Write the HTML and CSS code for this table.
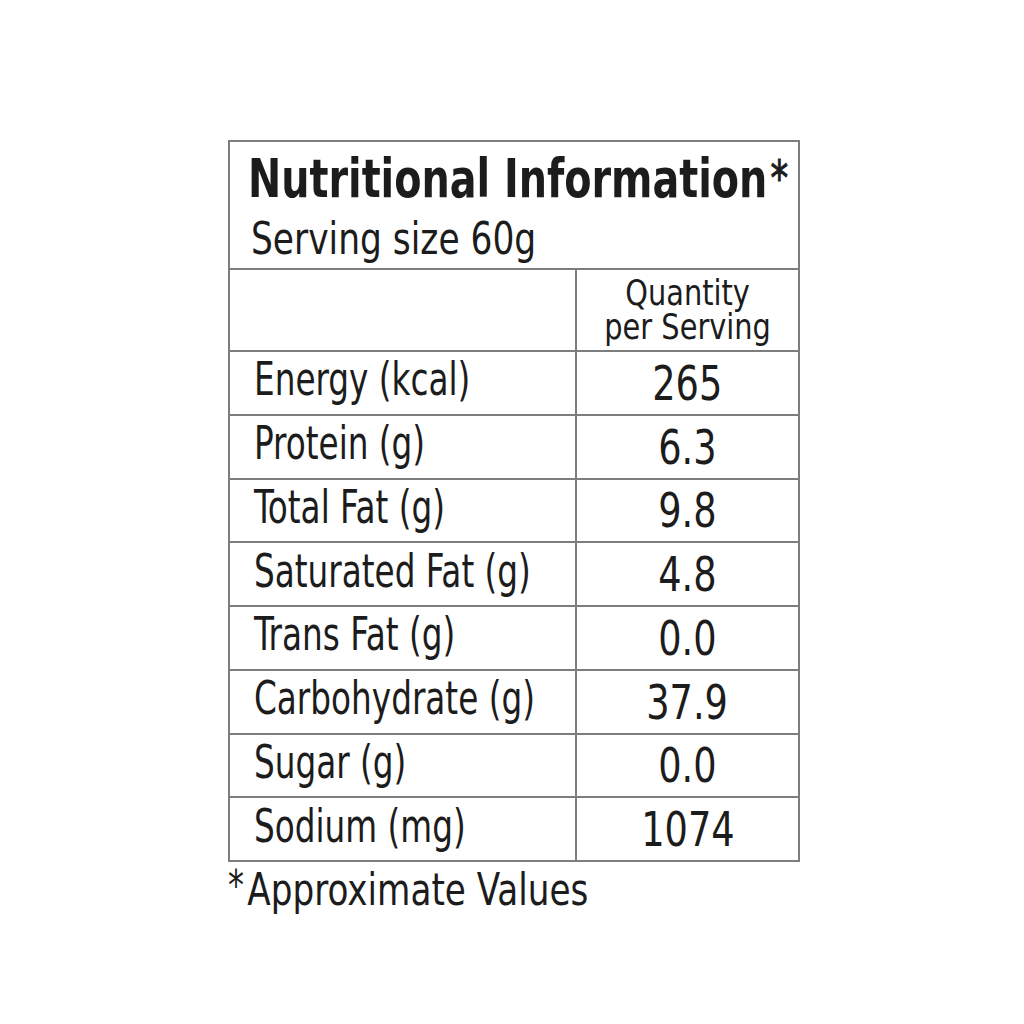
FILE: index.html
```html
<!DOCTYPE html>
<html>
<head>
<meta charset="utf-8">
<link rel="stylesheet" href="styles.css">
</head>
<body>
<div class="wrap">
  <table class="facts">
    <colgroup><col class="c1"><col class="c2"></colgroup>
    <tr>
      <td class="head" colspan="2">
        <div class="title"><span class="sx">Nutritional Information<span class="star">*</span></span></div>
        <div class="serving"><span class="sx">Serving size 60g</span></div>
      </td>
    </tr>
    <tr class="colhead">
      <td></td>
      <td class="qty"><span class="sxc">Quantity<br>per Serving</span></td>
    </tr>
    <tr><td class="name"><span class="sx">Energy (kcal)</span></td><td class="val"><span class="sxc">265</span></td></tr>
    <tr><td class="name"><span class="sx">Protein (g)</span></td><td class="val"><span class="sxc">6.3</span></td></tr>
    <tr><td class="name"><span class="sx">Total Fat (g)</span></td><td class="val"><span class="sxc">9.8</span></td></tr>
    <tr><td class="name"><span class="sx">Saturated Fat (g)</span></td><td class="val"><span class="sxc">4.8</span></td></tr>
    <tr><td class="name"><span class="sx">Trans Fat (g)</span></td><td class="val"><span class="sxc">0.0</span></td></tr>
    <tr><td class="name"><span class="sx">Carbohydrate (g)</span></td><td class="val"><span class="sxc">37.9</span></td></tr>
    <tr><td class="name"><span class="sx">Sugar (g)</span></td><td class="val"><span class="sxc">0.0</span></td></tr>
    <tr><td class="name"><span class="sx">Sodium (mg)</span></td><td class="val"><span class="sxc">1074</span></td></tr>
  </table>
  <div class="note"><span class="sx"><span class="nstar">*</span>Approximate Values</span></div>
</div>
</body>
</html>
```
FILE: styles.css
```css
html, body {
  margin: 0;
  padding: 0;
  background: #ffffff;
}
body {
  font-family: "DejaVu Sans Condensed", "DejaVu Sans", sans-serif;
  color: #1c1c1c;
}
.wrap {
  padding: 140px 0 0 228px;
}
.facts {
  border-collapse: collapse;
  table-layout: fixed;
  width: 570px;
  border: 2px solid #7d7d7d;
}
.c1 { width: 347px; }
.c2 { width: 223px; }
.facts td {
  border: 2px solid #7d7d7d;
  padding: 0;
  overflow: visible;
  white-space: nowrap;
}
.sx {
  display: inline-block;
  white-space: nowrap;
  transform-origin: 0 50%;
}
.sxc {
  display: inline-block;
  white-space: nowrap;
  transform-origin: 50% 50%;
}
.facts .head {
  height: 126px;
  padding: 0 0 0 18px;
  vertical-align: top;
}
.title {
  font-weight: bold;
  font-size: 54px;
  line-height: 60px;
  margin-top: 7px;
}
.title .sx {
  transform: scaleX(0.817);
}
.star {
  font-weight: normal;
  margin-left: 4px;
  font-size: 48px;
  position: relative;
  top: -2px;
  -webkit-text-stroke: 1px #1c1c1c;
}
.serving {
  font-size: 44px;
  line-height: 48px;
  margin-top: 5px;
  margin-left: 3px;
}
.serving .sx {
  transform: scaleX(0.87);
}
.colhead td {
  height: 80px;
}
.facts .qty {
  text-align: center;
  vertical-align: middle;
  font-size: 36px;
  line-height: 34px;
}
.qty .sxc {
  transform: scaleX(0.89);
}
.facts .name {
  height: 54.75px;
  padding: 0 0 7px 24px;
  font-size: 46px;
  line-height: 46px;
  vertical-align: middle;
}
.name .sx {
  transform: scaleX(0.79);
}
.facts .val {
  text-align: center;
  vertical-align: middle;
  font-size: 48px;
  line-height: 48px;
}
.val .sxc {
  transform: scaleX(0.85);
}
.note {
  font-size: 45px;
  line-height: 50px;
  margin-top: 3px;
}
.note .sx {
  transform: scaleX(0.846);
}
.nstar {
  font-size: 42px;
  vertical-align: top;
  position: relative;
  top: -4px;
  margin-right: 4px;
}
```
